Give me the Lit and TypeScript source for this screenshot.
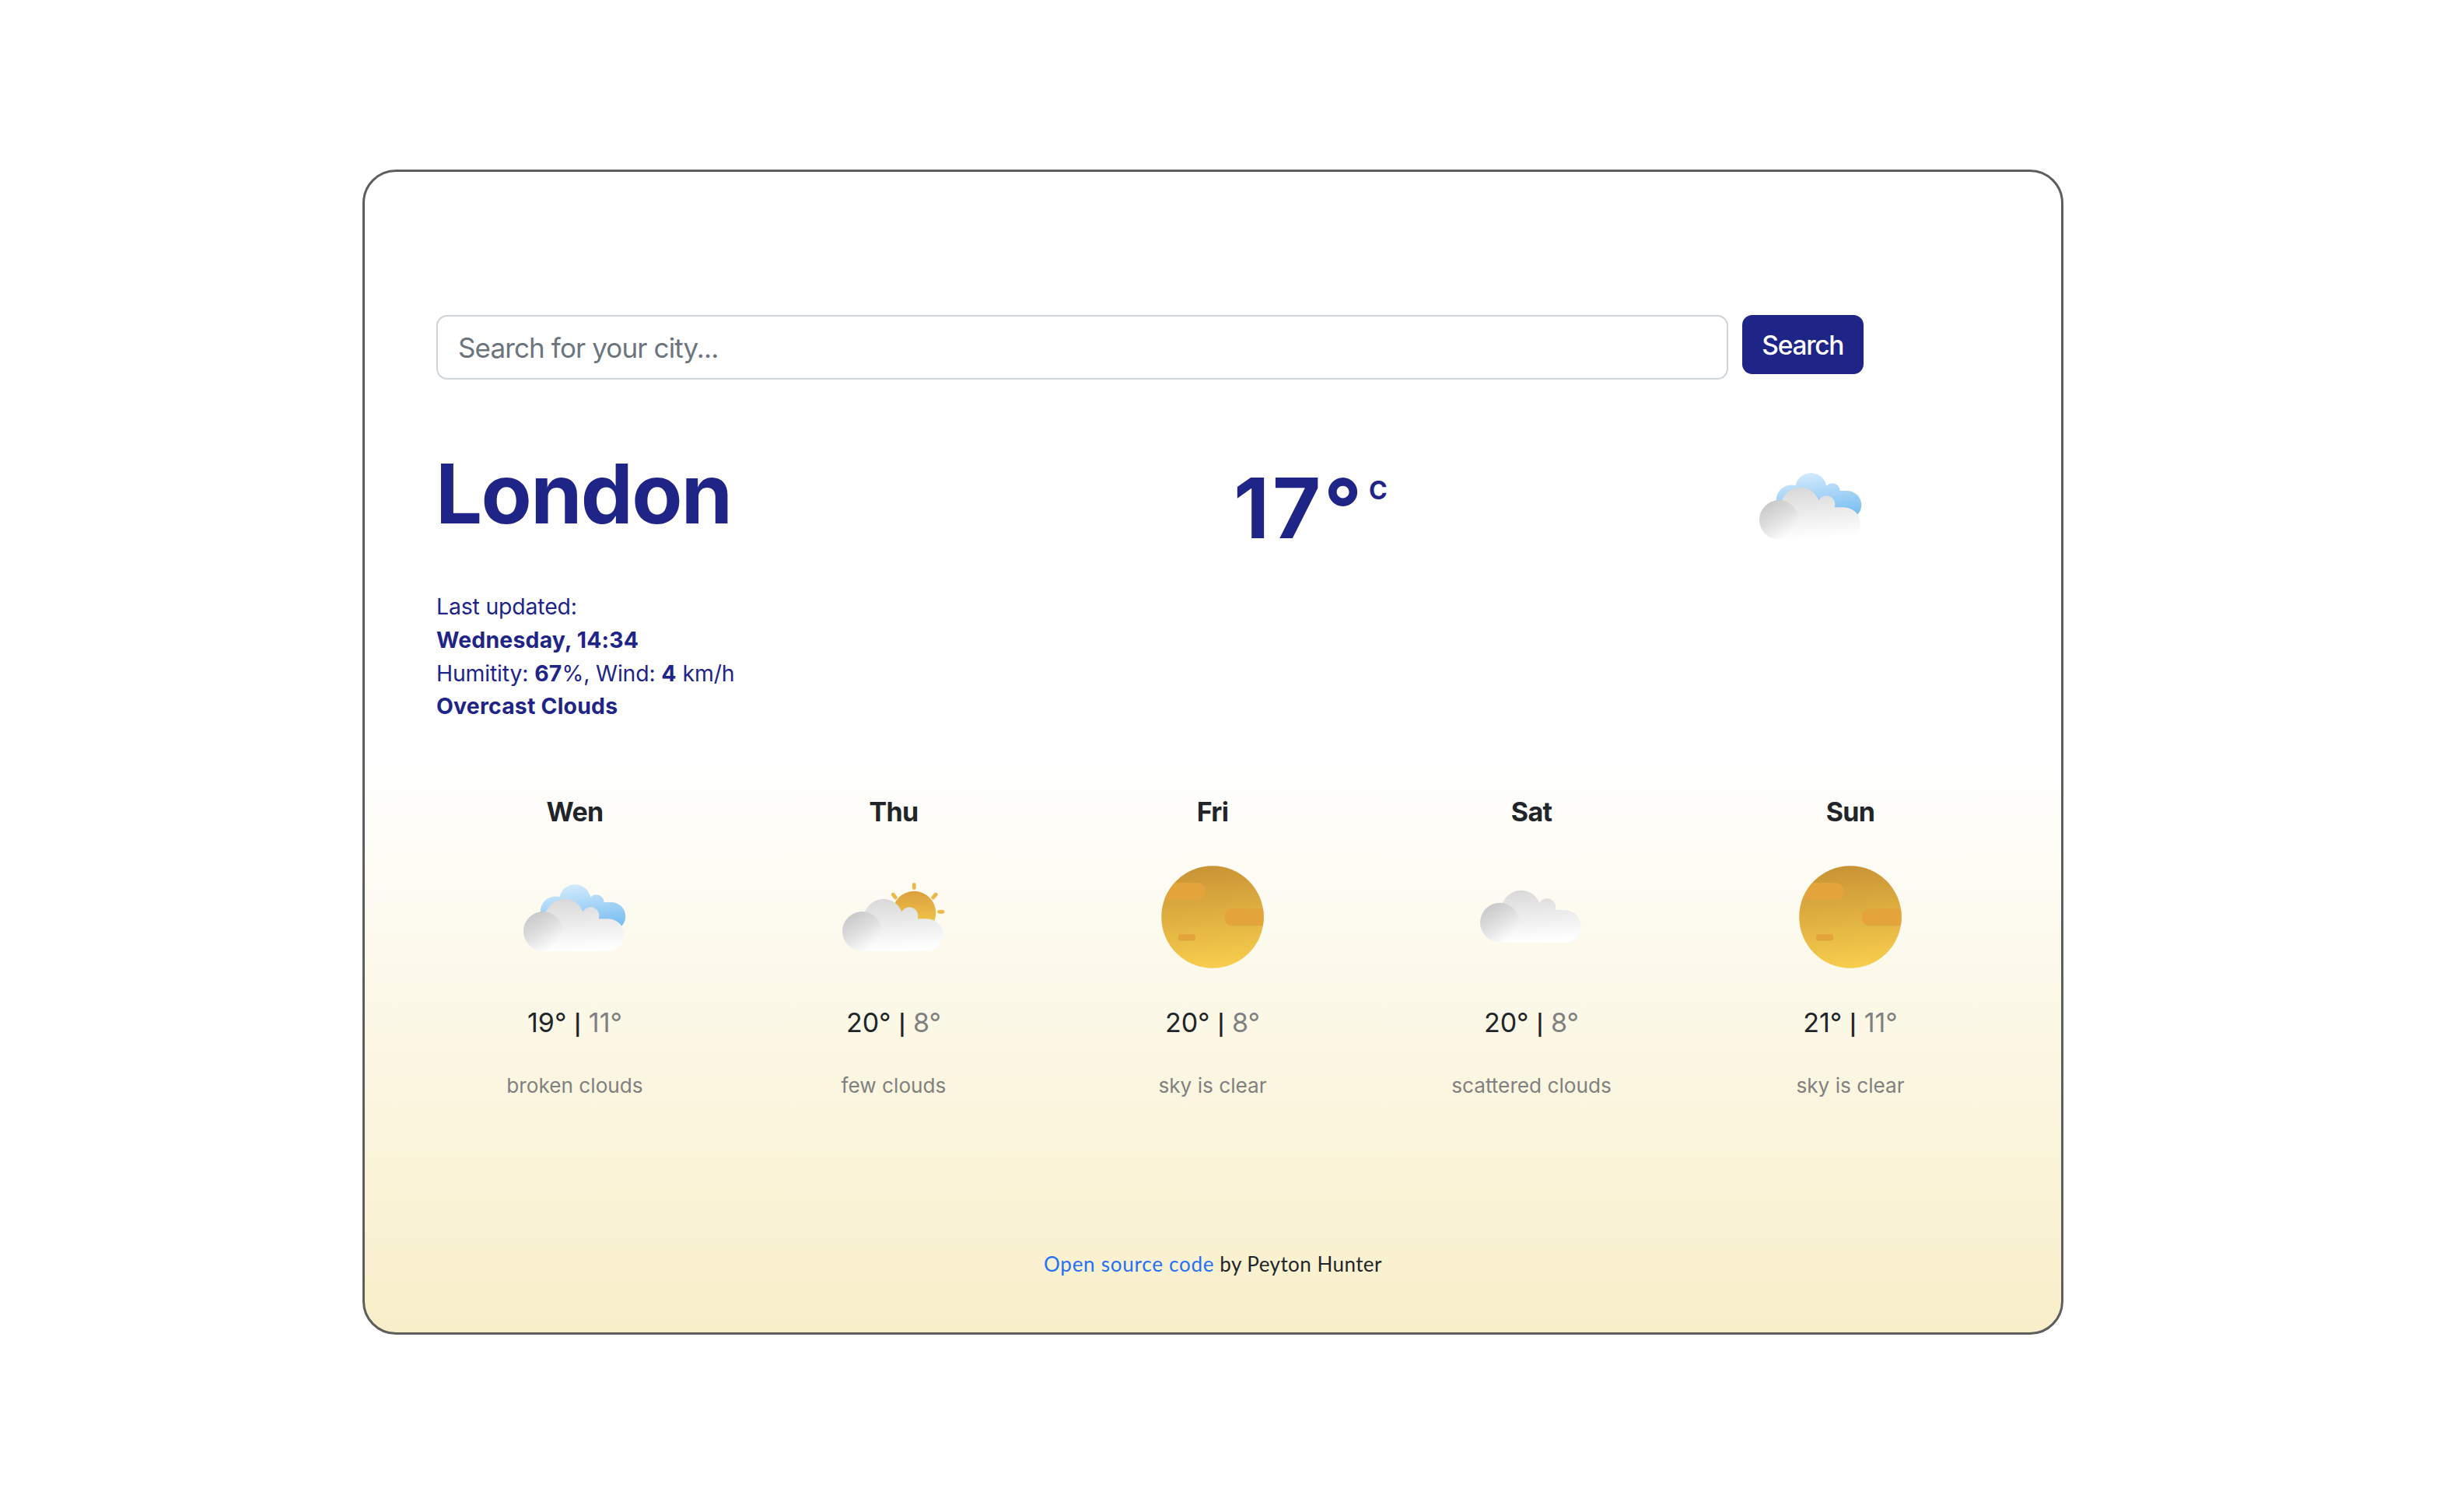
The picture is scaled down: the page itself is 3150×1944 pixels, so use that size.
import { LitElement, html, svg, css, nothing } from 'lit';
import { customElement, property, state } from 'lit/decorators.js';

type Kind = 'broken' | 'few' | 'clear' | 'scattered';

interface Day {
  name: string;
  kind: Kind;
  max: number;
  min: number;
  text: string;
}

@customElement('weather-icon')
class WeatherIcon extends LitElement {
  static styles = css`
    :host { display: block; width: 132px; height: 132px; }
    svg { display: block; width: 132px; height: 132px; overflow: visible; }
  `;

  @property() kind: Kind = 'clear';

  private greyCloud() {
    return svg`
      <path fill="url(#grey)" d="M27 109.7 V62 L32 54 A25 25 0 0 1 76.2 59.2 A11.3 11.3 0 0 1 96.8 68.3 H109 A20.7 20.7 0 0 1 109 109.7 Z"/>
      <circle cx="25.3" cy="84.3" r="25.3" fill="url(#ball)"/>`;
  }

  private blueCloud() {
    return svg`
      <g fill="url(#blue)">
        <circle cx="41.3" cy="59" r="19.6"/>
        <circle cx="66.3" cy="44.4" r="20.3"/>
        <circle cx="93.8" cy="47.2" r="10"/>
        <path d="M41 47 H113 A18.2 18.2 0 0 1 113 83.4 H41 Z"/>
      </g>`;
  }

  private smallSun() {
    return svg`
      <circle cx="92.3" cy="60.8" r="28" fill="url(#sun)"/>
      <g stroke="#edb848" stroke-width="4.8" stroke-linecap="round" fill="none">
        <path d="M92.3 24.4 V28.6"/>
        <path d="M116.6 41 L120.3 37"/>
        <path d="M68.4 41 L65.2 37"/>
        <path d="M124.6 59.3 H129"/>
      </g>`;
  }

  private fullSun() {
    return svg`
      <circle cx="66" cy="66" r="65.8" fill="url(#disc)"/>
      <g clip-path="url(#round)" fill="#e3a43c">
        <rect x="-20" y="22" width="77" height="22" rx="9.5"/>
        <rect x="81.3" y="55.3" width="70" height="22" rx="9.5"/>
        <rect x="22" y="88" width="22" height="8.6" rx="3.6"/>
      </g>`;
  }

  render() {
    const k = this.kind;
    return html`<svg viewBox="0 0 132 132" aria-hidden="true">
      <defs>
        <linearGradient id="grey" gradientUnits="userSpaceOnUse" x1="60" y1="41" x2="64" y2="109">
          <stop offset="0" stop-color="#d8d8d8"/><stop offset="1" stop-color="#ffffff"/>
        </linearGradient>
        <linearGradient id="ball" gradientUnits="userSpaceOnUse" x1="14" y1="62" x2="40" y2="106">
          <stop offset="0" stop-color="#cacaca"/><stop offset="0.45" stop-color="#dedede"/><stop offset="1" stop-color="#ffffff"/>
        </linearGradient>
        <linearGradient id="blue" gradientUnits="userSpaceOnUse" x1="70" y1="24" x2="78" y2="80">
          <stop offset="0" stop-color="#d1e9fc"/><stop offset="1" stop-color="#7dc0f0"/>
        </linearGradient>
        <linearGradient id="sun" gradientUnits="userSpaceOnUse" x1="0" y1="33" x2="0" y2="74">
          <stop offset="0" stop-color="#dc9f3e"/><stop offset="1" stop-color="#efc54a"/>
        </linearGradient>
        <linearGradient id="disc" x1="0.45" y1="0" x2="0.55" y2="1">
          <stop offset="0" stop-color="#c99335"/><stop offset="1" stop-color="#f7ce4d"/>
        </linearGradient>
        <clipPath id="round"><circle cx="66" cy="66" r="65.8"/></clipPath>
      </defs>
      ${k === 'clear' ? this.fullSun() : nothing}
      ${k === 'few' ? this.smallSun() : nothing}
      ${k === 'broken' ? this.blueCloud() : nothing}
      ${k === 'clear'
        ? nothing
        : svg`<g transform="translate(0 ${k === 'scattered' ? -11.2 : 0})">${this.greyCloud()}</g>`}
    </svg>`;
  }
}

@customElement('forecast-day')
class ForecastDay extends LitElement {
  static styles = css`
    :host {
      display: flex;
      flex-direction: column;
      align-items: center;
      color: #212529;
      white-space: nowrap;
    }
    .name { font-size: 34px; line-height: 51px; font-weight: 700; letter-spacing: -0.7px; }
    .icon { margin: 43.4px 0 44.6px; }
    .temps { font-size: 34px; line-height: 51px; font-weight: 440; }
    .bar { font-size: 26px; font-weight: 600; line-height: 1; }
    .min, .text { color: #808080; }
    .text { margin-top: 35.2px; font-size: 26.2px; line-height: 39px; font-weight: 430; }
  `;

  @property({ attribute: false }) day!: Day;

  render() {
    const d = this.day;
    return html`
      <div class="name">${d.name}</div>
      <weather-icon class="icon" .kind=${d.kind}></weather-icon>
      <div class="temps">${d.max}° <span class="bar">|</span> <span class="min">${d.min}°</span></div>
      <div class="text">${d.text}</div>
    `;
  }
}

@customElement('app-root')
class AppRoot extends LitElement {
  static styles = css`
    :host {
      display: flow-root;
      height: 1944px;
      background: #fff;
      font-family: Inter, "Liberation Sans", sans-serif;
      color: #1f2487;
    }
    .card {
      box-sizing: border-box;
      width: 2187px;
      height: 1498px;
      margin: 218px 0 0 466px;
      padding: 183.5px 92px 0;
      border: 3px solid #5e5e5e;
      border-radius: 43px;
      background: linear-gradient(#fff 50%, #f8efc9 100%);
    }
    .search { display: flex; align-items: flex-start; gap: 17.5px; }
    .field {
      box-sizing: border-box;
      width: 1661px;
      height: 83px;
      margin: 0.5px 0 0;
      padding: 1px 26px 0;
      border: 2px solid #ced4da;
      border-radius: 14px;
      background: #fff;
      font: 430 35px Inter, "Liberation Sans", sans-serif;
      letter-spacing: -0.88px;
      color: #212529;
      outline: none;
    }
    .field::placeholder { color: #6c757d; opacity: 1; }
    .button {
      box-sizing: border-box;
      width: 156.5px;
      height: 76.5px;
      padding: 1.5px 0 0;
      border: 0;
      border-radius: 13px;
      background: #1f2487;
      color: #fff;
      font: 460 33.5px Inter, "Liberation Sans", sans-serif;
      letter-spacing: -1.25px;
    }
    .today { display: flex; align-items: flex-start; margin-top: 83px; }
    .place { width: 1025px; }
    .city {
      margin: 0 0 0 -1px;
      font-size: 106.5px;
      line-height: 128px;
      font-weight: 700;
      letter-spacing: -1.7px;
    }
    .details {
      margin: 60.3px 0 0;
      padding: 0;
      list-style: none;
      font-size: 28.4px;
      line-height: 42.67px;
      letter-spacing: -0.16px;
    }
    .details b { letter-spacing: 0.2px; }
    .now { display: flex; align-items: flex-start; width: 676px; margin-top: 17.6px; }
    .degrees { font-size: 107px; line-height: 128px; font-weight: 700; letter-spacing: 3.8px; }
    .unit { margin: 22.5px 0 0 5px; font-size: 32px; line-height: 40px; font-weight: 700; }
    .sky { margin-top: 12.5px; }
    .forecast {
      display: grid;
      grid-template-columns: repeat(5, 410px);
      margin: 88.5px -26px 0 -27px;
    }
    .footer {
      margin-top: 191.8px;
      font-family: Lato, "Open Sans", sans-serif;
      font-size: 26px;
      line-height: 38px;
      letter-spacing: 0.45px;
      text-align: center;
      color: #212529;
    }
    .link { color: #2470f8; letter-spacing: 0.75px; text-decoration: none; }
  `;

  @state() private days: Day[] = [
    { name: 'Wen', kind: 'broken', max: 19, min: 11, text: 'broken clouds' },
    { name: 'Thu', kind: 'few', max: 20, min: 8, text: 'few clouds' },
    { name: 'Fri', kind: 'clear', max: 20, min: 8, text: 'sky is clear' },
    { name: 'Sat', kind: 'scattered', max: 20, min: 8, text: 'scattered clouds' },
    { name: 'Sun', kind: 'clear', max: 21, min: 11, text: 'sky is clear' },
  ];

  render() {
    return html`
      <main class="card">
        <form class="search" @submit=${(e: Event) => e.preventDefault()}>
          <input class="field" type="text" placeholder="Search for your city..." />
          <button class="button" type="submit">Search</button>
        </form>
        <section class="today">
          <div class="place">
            <h1 class="city">London</h1>
            <ul class="details">
              <li>Last updated:</li>
              <li><b>Wednesday, 14:34</b></li>
              <li>Humitity: <b>67</b>%, Wind: <b>4</b> km/h</li>
              <li><b>Overcast Clouds</b></li>
            </ul>
          </div>
          <div class="now">
            <span class="degrees">17°</span>
            <span class="unit">C</span>
          </div>
          <weather-icon class="sky" .kind=${'broken'}></weather-icon>
        </section>
        <section class="forecast">
          ${this.days.map((day) => html`<forecast-day .day=${day}></forecast-day>`)}
        </section>
        <footer class="footer"><a class="link" href="#">Open source code</a> by Peyton Hunter</footer>
      </main>
    `;
  }
}
